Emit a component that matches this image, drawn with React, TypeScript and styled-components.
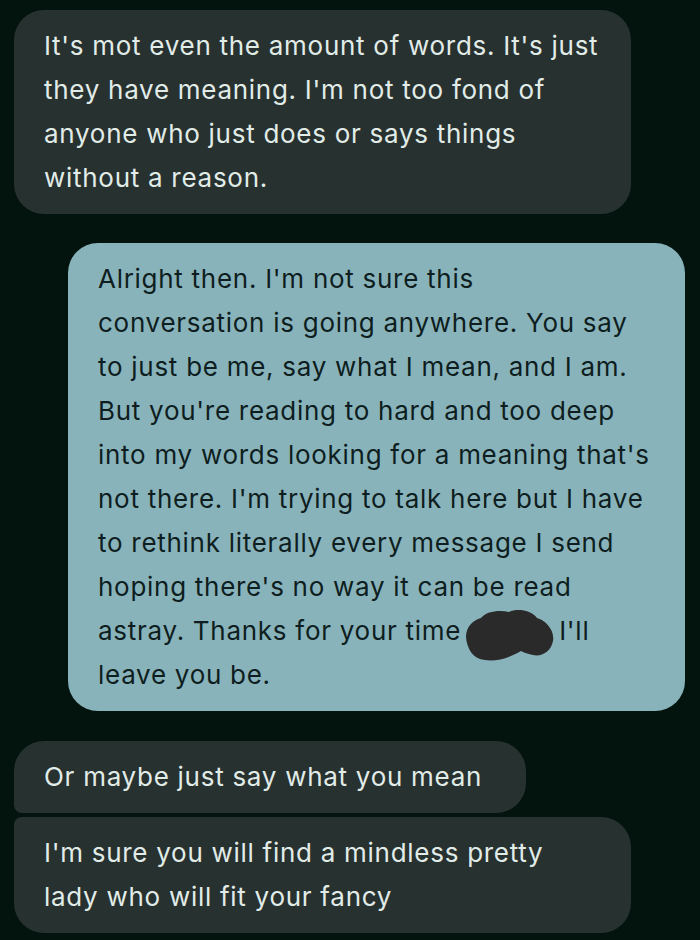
import React from "react";
import styled, { createGlobalStyle } from "styled-components";

const GlobalStyle = createGlobalStyle`
  html, body {
    margin: 0;
    padding: 0;
    background: #03140f;
  }
  body {
    font-family: Inter, Roboto, "Noto Sans", sans-serif;
  }
`;

type Side = "in" | "out";
type Corner = "single" | "first" | "last";

const Thread = styled.main`
  width: 700px;
  height: 940px;
  box-sizing: border-box;
  padding: 10px 15px 0 14px;
  display: flex;
  flex-direction: column;
  overflow: hidden;
`;

const Bubble = styled.div<{ $side: Side; $corner?: Corner; $wide?: boolean }>`
  align-self: ${(p) => (p.$side === "out" ? "flex-end" : "flex-start")};
  width: ${(p) => (p.$wide ? "617px" : "auto")};
  box-sizing: border-box;
  padding: 14px ${(p) => (p.$wide ? "30px" : "44px")} 14px 30px;
  font-size: 26px;
  line-height: 44px;
  letter-spacing: 0.72px;
  color: ${(p) => (p.$side === "out" ? "#0e1e20" : "#e1ece8")};
  background: ${(p) => (p.$side === "out" ? "#89b3bb" : "#27312f")};
  border-radius: ${(p) =>
    p.$corner === "first"
      ? "30px 30px 30px 8px"
      : p.$corner === "last"
      ? "8px 30px 30px 30px"
      : "30px"};
  margin-top: ${(p) => (p.$corner === "last" ? "4px" : "0")};
`;

const Gap = styled.div<{ $h: number }>`
  height: ${(p) => p.$h}px;
  flex: none;
`;

const Redaction = styled.span`
  display: inline-block;
  position: relative;
  width: 98px;
  height: 44px;
  vertical-align: top;

  svg {
    position: absolute;
    left: 4px;
    top: -2px;
  }
`;

const Scribble = () => (
  <svg width="90" height="56" viewBox="0 0 90 56">
    <path
      d="M1 30 C1 20 8 13 16 11 C22 4 34 3 44 5 C52 1 66 3 72 11 C80 13 90 23 88 34 C86 45 76 50 68 48 C62 47 58 45 56 44 C46 50 32 55 20 53 C8 52 2 42 1 30 Z"
      fill="#2a2a2a"
    />
  </svg>
);

export default function App() {
  return (
    <>
      <GlobalStyle />
      <Thread>
        <Bubble $side="in" $wide>
          It's mot even the amount of words. It's just
          <br />
          they have meaning. I'm not too fond of
          <br />
          anyone who just does or says things
          <br />
          without a reason.
        </Bubble>
        <Gap $h={29} />
        <Bubble $side="out" $wide>
          Alright then. I'm not sure this
          <br />
          conversation is going anywhere. You say
          <br />
          to just be me, say what I mean, and I am.
          <br />
          But you're reading to hard and too deep
          <br />
          into my words looking for a meaning that's
          <br />
          not there. I'm trying to talk here but I have
          <br />
          to rethink literally every message I send
          <br />
          hoping there's no way it can be read
          <br />
          astray. Thanks for your time
          <Redaction>
            <Scribble />
          </Redaction>
          I'll
          <br />
          leave you be.
        </Bubble>
        <Gap $h={30} />
        <Bubble $side="in" $corner="first">
          Or maybe just say what you mean
        </Bubble>
        <Bubble $side="in" $corner="last" $wide>
          I'm sure you will find a mindless pretty
          <br />
          lady who will fit your fancy
        </Bubble>
      </Thread>
    </>
  );
}
